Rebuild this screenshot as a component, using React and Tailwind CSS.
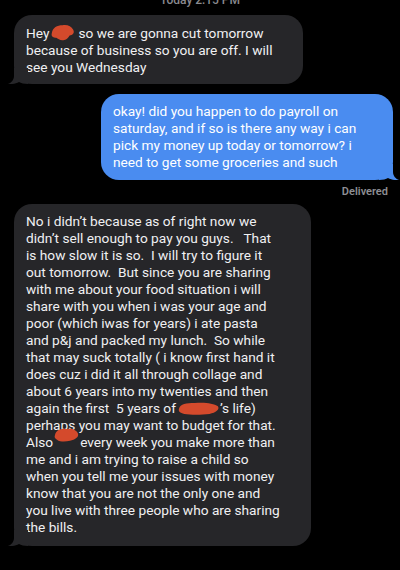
import React from "react";

const font = { fontFamily: "Roboto, 'Liberation Sans', Arial, sans-serif" };

function Blob({ w, variant = 0 }) {
  const paths = [
    "M2 9 C3 4 8 2 14 2 C19 1 24 3 26 6 C28 9 25 11 22 11 C20 13 19 15 16 15 C12 16 9 14 7 13 C4 13 1 12 2 9 Z",
    "M1 6 C2 2 8 1 16 1 C24 0 34 1 38 4 C40 7 36 10 30 11 C22 12 12 12 6 11 C2 10 0 9 1 6 Z",
    "M1 6 C2 2 7 0 13 1 C18 0 23 2 24 5 C25 8 21 10 16 11 C11 12 6 12 3 10 C1 9 0 8 1 6 Z",
  ];
  const vb = ["0 0 28 16", "0 0 40 12", "0 0 26 12"][variant];
  const sizes = [
    "w-[25px] h-[18px] top-[-2px] left-[1px]",
    "w-[42px] h-[13px] top-[2px] left-[2px]",
    "w-[26px] h-[14px] top-[-6px] left-[1px]",
  ][variant];
  return (
    <span className="relative inline-block align-baseline" style={{ width: w }}>
      &nbsp;
      <svg viewBox={vb} preserveAspectRatio="none" className={`absolute ${sizes}`}>
        <path d={paths[variant]} fill="#d44a2c" />
      </svg>
    </span>
  );
}

function LeftTail({ color }) {
  return (
    <svg viewBox="0 0 20 16" className="absolute left-[-6px] bottom-0 w-[20px] h-[16px]">
      <path d="M6 0 L6 8 C6 12 3 15 0 16 C4 16.5 8 15.5 11 14 C13 15.3 16 16 20 16 L20 0 Z" fill={color} />
    </svg>
  );
}

function RightTail({ color }) {
  return (
    <svg viewBox="0 0 20 16" className="absolute right-[-6px] bottom-0 w-[20px] h-[16px]">
      <path d="M14 0 L14 8 C14 12 17 15 20 16 C16 16.5 12 15.5 9 14 C7 15.3 4 16 0 16 L0 0 Z" fill={color} />
    </svg>
  );
}

function Lines({ lines }) {
  return (
    <div className="text-[13.7px] leading-[17px] whitespace-pre">
      {lines.map((l, i) => (
        <div key={i}>{l}</div>
      ))}
    </div>
  );
}

export default function App() {
  const big = [
    "No i didn’t because as of right now we",
    "didn’t sell enough to pay you guys.   That",
    "is how slow it is so.  I will try to figure it",
    "out tomorrow.  But since you are sharing",
    "with me about your food situation i will",
    "share with you when i was your age and",
    "poor (which iwas for years) i ate pasta",
    "and p&j and packed my lunch.  So while",
    "that may suck totally ( i know first hand it",
    "does cuz i did it all through collage and",
    "about 6 years into my twenties and then",
    <>again the first  5 years of<Blob w={44} variant={1} />’s life)</>,
    "perhaps you may want to budget for that.",
    <>Also<Blob w={27} variant={2} />every week you make more than</>,
    "me and i am trying to raise a child so",
    "when you tell me your issues with money",
    "know that you are not the only one and",
    "you live with three people who are sharing",
    "the bills.",
  ];
  return (
    <div className="w-[400px] h-[570px] bg-black overflow-hidden text-[#f0f0f2]" style={font}>
      <div className="text-center text-[12px] leading-[12px] text-[#8a8a8f] mt-[-6px] font-medium">
        Today 2:15 PM
      </div>
      <div className="pl-[14px] mt-[9px]">
        <div className="relative w-[289px] rounded-[18px] bg-[#262629] pl-[12px] pt-[10px] pb-[8px]">
          <Lines
            lines={[
              <>Hey<Blob w={29} variant={0} />so we are gonna cut tomorrow</>,
              "because of business so you are off. I will",
              "see you Wednesday",
            ]}
          />
          <LeftTail color="#262629" />
        </div>
      </div>
      <div className="flex justify-end pr-[7px] mt-[10px]">
        <div className="relative w-[292px] rounded-[18px] bg-[#4a8cf0] pl-[12px] pt-[9px] pb-[9px] text-white">
          <Lines
            lines={[
              "okay! did you happen to do payroll on",
              "saturday, and if so is there any way i can",
              "pick my money up today or tomorrow? i",
              "need to get some groceries and such",
            ]}
          />
          <RightTail color="#4a8cf0" />
        </div>
      </div>
      <div className="flex justify-end pr-[12px] mt-[5px] text-[11px] leading-[14px] font-semibold text-[#8e8e93]">
        Delivered
      </div>
      <div className="pl-[14px] mt-[5px]">
        <div className="relative w-[297px] rounded-[18px] bg-[#262629] pl-[12px] pt-[9px] pb-[10px]">
          <Lines lines={big} />
          <LeftTail color="#262629" />
        </div>
      </div>
    </div>
  );
}
